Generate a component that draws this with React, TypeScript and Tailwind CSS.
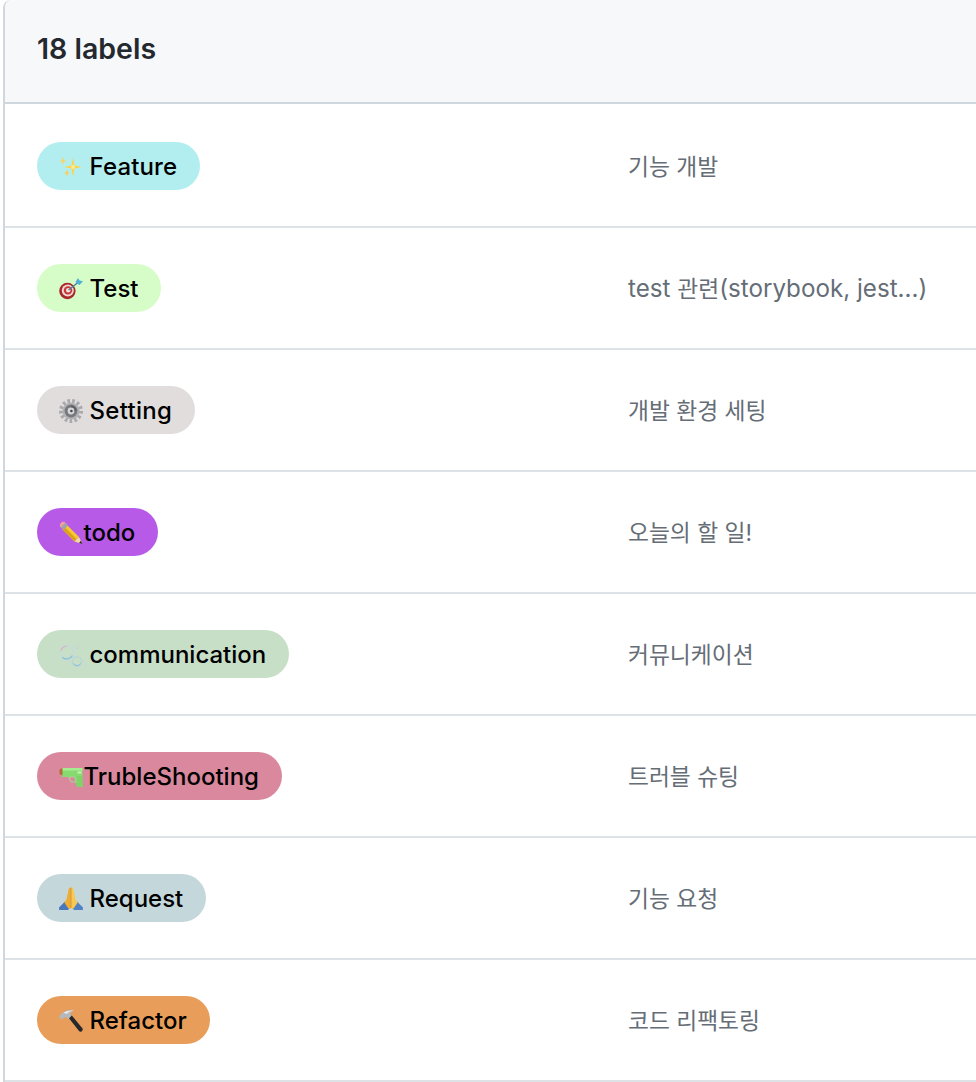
import React from "react";

const Sparkles = () => (
  <svg width="24" height="24" viewBox="0 0 24 24">
    <path d="M14 2.5 L15.5 10.4 L23 12 L15.5 13.6 L14 21.5 L12.5 13.6 L5 12 L12.5 10.4Z" fill="#f9d54a" />
    <path d="M4 1.5 L4.9 5 L7.5 6 L4.9 7 L4 10.5 L3.1 7 L.5 6 L3.1 5Z" fill="#f7d36a" />
    <path d="M8 14 L8.9 17.2 L11.5 18 L8.9 18.8 L8 22 L7.1 18.8 L4.5 18 L7.1 17.2Z" fill="#f7d05a" />
    <circle cx="14" cy="12" r="2" fill="#fdeb9a" />
  </svg>
);

const Target = () => (
  <svg width="24" height="24" viewBox="0 0 24 24">
    <circle cx="8.4" cy="14" r="8.2" fill="#a8282c" />
    <circle cx="8.8" cy="13.6" r="6" fill="#f0d8d2" />
    <circle cx="9" cy="13.4" r="4.2" fill="#c8383a" />
    <circle cx="9.2" cy="13.2" r="2.2" fill="#f5e3de" />
    <path d="M9.5 13 L19 5.5" stroke="#4f7f96" strokeWidth="1.5" />
    <path d="M16.5 5 L19 1 L20.5 3.6 L24 4.2 L20.5 8 L18.8 7Z" fill="#4fb0d8" />
  </svg>
);

const Gear = () => (
  <svg width="24" height="24" viewBox="0 0 24 24">
    <circle cx="12" cy="12" r="10" fill="none" stroke="#a8a9ac" strokeWidth="4" strokeDasharray="2.6 2.2" />
    <circle cx="12" cy="12" r="8.6" fill="#b0b1b4" />
    <circle cx="12" cy="12" r="6.4" fill="#77787c" />
    <path d="M12 6.5 A5.5 5.5 0 0 1 17.5 12 L14 12 A2 2 0 0 0 12 10Z" fill="#5c5d61" />
    <circle cx="12" cy="12" r="3.4" fill="#d6d6d8" />
    <circle cx="12.4" cy="12" r="1.3" fill="#45464a" />
  </svg>
);

const Pencil = () => (
  <svg width="24" height="24" viewBox="0 0 24 24">
    <path d="M7.5 3.5 L20 16 L15.5 20.5 L3 8Z" fill="#f5c832" />
    <path d="M5.2 5.8 L17.8 18.2 L15.5 20.5 L3 8Z" fill="#dca01e" />
    <path d="M20 16 L23.5 23 L15.5 20.5Z" fill="#f1d9a8" />
    <path d="M21.8 19.8 L23.5 23 L20.2 22Z" fill="#2a2320" />
    <path d="M5.2 0.8 L8.4 3.8 L4 8.4 L1 5.2 Q0.4 3.2 2 1.7 Q3.6 0.3 5.2 0.8Z" fill="#f0a0a0" />
    <path d="M6.2 1.8 L9 4.5 L4.7 9 L2 6.2Z" fill="#a0a4a8" />
  </svg>
);

const Bubbles = () => (
  <svg width="24" height="24" viewBox="0 0 24 24" fill="none">
    <circle cx="8" cy="9.5" r="6.8" stroke="#c4dade" strokeWidth="1.3" />
    <path d="M2 8 A6.4 6.4 0 0 1 8 3" stroke="#dfa9c4" strokeWidth="1.1" />
    <path d="M3.4 14.5 A6.8 6.8 0 0 0 13.4 12.6" stroke="#86bedc" strokeWidth="1.2" />
    <circle cx="18" cy="18.5" r="4.7" stroke="#b8d4da" strokeWidth="1.3" />
    <path d="M14.4 20.5 A4.4 4.4 0 0 0 21.8 20.5" stroke="#8abfdc" strokeWidth="1" />
    <circle cx="18" cy="3.5" r="2.3" stroke="#c8d8d6" strokeWidth="1" />
  </svg>
);

const WaterGun = () => (
  <svg width="24" height="24" viewBox="0 0 24 24">
    <path d="M3 3 H23.5 V12 H3Z" fill="#86da70" />
    <path d="M14.5 11 H23.5 L24 22 H18Z" fill="#7dd568" />
    <path d="M3 3 H23.5 V5.6 H3Z" fill="#a6ec90" />
    <path d="M10 12 H16.5 L17 17 H12.5 Q10.5 15 10 12Z" fill="none" stroke="#b3cd98" strokeWidth="1.2" />
    <path d="M0.5 4.5 L3.5 3 V10.5 L0.5 9Z" fill="#b66a38" />
    <rect x="18.5" y="6.5" width="4" height="2" fill="#c8f4b4" />
  </svg>
);

const Pray = () => (
  <svg width="24" height="24" viewBox="0 0 24 24">
    <path d="M6 14.5 L0 20.5 L0.2 23 H9 L11 21 L9 16Z" fill="#4a77bb" />
    <path d="M18 14.5 L24 20.5 L23.8 23 H15 L13 21 L15 16Z" fill="#5282c6" />
    <path d="M11.8 0 Q9.6 0.6 9 5 L7.6 12 L5.4 15.8 L9.8 22 L11.9 21Z" fill="#efad35" />
    <path d="M12.2 0 Q14.4 0.6 15 5 L16.4 12 L18.6 15.8 L14.2 22 L12.1 21Z" fill="#f8c850" />
    <path d="M12 1 V21" stroke="#d38a24" strokeWidth="0.8" />
  </svg>
);

const Hammer = () => (
  <svg width="24" height="24" viewBox="0 0 24 24">
    <path d="M9 8 L12 5.5 L23.6 19.5 Q24 21 22.6 22.6 Q21 23.2 20 22Z" fill="#26282c" />
    <path d="M0 7.5 Q3 3.2 7 1.8 Q11 0.4 15 1.5 Q11.8 2.6 11.2 4.5 L13 6.2 L9 10.5 L7.3 8.4 Q6 7.6 5 8.2 L3.2 10.5 L0.6 8.8Z" fill="#b4b8bc" />
    <path d="M4.5 3.4 Q9 1 15 1.5 Q10 2.4 7.5 5Z" fill="#e8ebee" />
  </svg>
);

const rows = [
  { icon: <Sparkles />, space: true, name: "Feature", nameClass: "tracking-[0.14px]", bg: "bg-[#b2eeef]", desc: <>기능 개발</> },
  { icon: <Target />, space: true, name: "Test", nameClass: "", bg: "bg-[#d6fdc7]", desc: <><span className="text-[24.2px]">test </span>관련<span className="text-[24.2px]">(storybook, jest...)</span></> },
  { icon: <Gear />, space: true, name: "Setting", nameClass: "tracking-[0.28px]", bg: "bg-[#e1dddc]", desc: <>개발 환경 세팅</> },
  { icon: <Pencil />, space: false, name: "todo", nameClass: "", bg: "bg-[#b85ae8]", desc: <>오늘의 할 일!</> },
  { icon: <Bubbles />, space: true, name: "communication", nameClass: "", bg: "bg-[#c7dfc7]", desc: <>커뮤니케이션</> },
  { icon: <WaterGun />, space: false, name: "TrubleShooting", nameClass: "", bg: "bg-[#d9889d]", desc: <>트러블 슈팅</> },
  { icon: <Pray />, space: true, name: "Request", nameClass: "", bg: "bg-[#c4d8dc]", desc: <>기능 요청</> },
  { icon: <Hammer />, space: true, name: "Refactor", nameClass: "", bg: "bg-[#e89e5a]", desc: <>코드 리팩토링</> },
];

export default function App() {
  return (
    <div className="h-[1082px] w-[976px] overflow-hidden bg-white pl-[3px] font-['Inter','Noto_Sans_CJK_KR',sans-serif]">
      <div className="rounded-tl-[8px] border-l-2 border-[#d0d7de]">
        <div className="flex h-[104px] items-center rounded-tl-[8px] border-b-2 border-[#d0d7de] bg-[#f6f8fa] pb-[4px] pl-[32px]">
          <h3 className="text-[28.5px] leading-none font-semibold text-[#24292f]">18 labels</h3>
        </div>
        {rows.map((r, i) => (
          <div
            key={r.name}
            className={`flex items-start border-b-2 border-[#dde2e7] pl-[32px] ${i === 0 ? "h-[124px] pt-[38px]" : "h-[122px] pt-[36px]"}`}
          >
            <div className="w-[591px] shrink-0">
              <span className={`inline-flex h-[48px] items-center rounded-full pr-[23px] pl-[22px] text-[24px] font-medium text-black ${r.bg}`}>
                <span className="flex h-[24px] w-[24px] shrink-0 translate-y-[1px] items-center justify-center">{r.icon}</span>
                <span className={`pt-[2px] ${r.nameClass} ${r.space ? "ml-[6.5px]" : "ml-[0.5px]"}`}>{r.name}</span>
              </span>
            </div>
            <p className="pt-[8px] text-[22.75px] leading-[34px] whitespace-nowrap text-[#656d76]">{r.desc}</p>
          </div>
        ))}
      </div>
    </div>
  );
}
